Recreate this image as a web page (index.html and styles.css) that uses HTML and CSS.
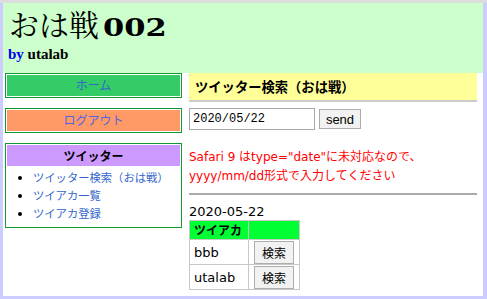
FILE: index.html
```html
<!DOCTYPE html>
<html lang="ja">
<head>
<meta charset="utf-8">
<title>おは戦002</title>
<link rel="stylesheet" href="styles.css">
</head>
<body>
<div class="page">
  <header class="header">
    <h1 class="title">おは戦<span class="num">002</span></h1>
    <p class="byline"><span class="by">by</span> utalab</p>
  </header>
  <div class="columns">
    <nav class="side">
      <a class="btn btn-home" href="#">ホーム</a>
      <a class="btn btn-logout" href="#">ログアウト</a>
      <div class="box">
        <div class="box-head">ツイッター</div>
        <ul class="box-list">
          <li><a href="#">ツイッター検索（おは戦）</a></li>
          <li><a href="#">ツイアカ一覧</a></li>
          <li><a href="#">ツイアカ登録</a></li>
        </ul>
      </div>
    </nav>
    <main class="main">
      <h2 class="main-title">ツイッター検索（おは戦）</h2>
      <form class="search">
        <input class="date-input" type="text" value="2020/05/22">
        <button class="send" type="button">send</button>
      </form>
      <p class="note">Safari 9 はtype="date"に未対応なので、<br>yyyy/mm/dd形式で入力してください</p>
      <hr class="rule">
      <div class="date">2020-05-22</div>
      <table class="accounts">
        <tr><th>ツイアカ</th><th></th></tr>
        <tr><td>bbb</td><td class="act"><button class="go" type="button">検索</button></td></tr>
        <tr><td>utalab</td><td class="act"><button class="go" type="button">検索</button></td></tr>
      </table>
    </main>
  </div>
</div>
</body>
</html>
```
FILE: styles.css
```css
html, body { margin: 0; padding: 0; }
body {
  background: #ccccff;
  border-top: 3px solid #dddddd;
  height: 296px;
  box-sizing: border-box;
  overflow: hidden;
  font-family: "DejaVu Sans", "Noto Sans CJK JP", sans-serif;
}
.page {
  margin: 0 4px 0 3px;
  background: #ffffff;
  height: 293px;
}
.header {
  background: #ccffcc;
  height: 70px;
  padding: 0 0 0 6px;
  box-sizing: border-box;
}
.title {
  margin: 0;
  padding-top: 4px;
  font-family: "Liberation Serif", "Noto Serif CJK JP", "Noto Sans CJK JP", serif;
  font-weight: normal;
  font-size: 30px;
  line-height: 38px;
  color: #000;
}
.title .num {
  display: inline-block;
  font-family: "DejaVu Serif", serif;
  font-weight: bold;
  font-size: 25px;
  margin-left: 4px;
  transform: scaleX(1.22);
  transform-origin: left bottom;
}
.byline {
  margin: 0 0 0 -1px;
  font-family: "Liberation Serif", serif;
  font-weight: bold;
  font-size: 15px;
  line-height: 14px;
  color: #000;
}
.by { color: #0000ee; }
.columns {
  display: flex;
  gap: 7px;
  padding-left: 2px;
}
.side {
  width: 177px;
  display: flex;
  flex-direction: column;
  gap: 10px;
}
.btn {
  display: block;
  height: 25px;
  box-sizing: border-box;
  border: 1px solid #119933;
  box-shadow: inset 0 0 0 1px #ffffff;
  text-align: center;
  font-family: "Noto Sans CJK JP", sans-serif;
  font-size: 12px;
  line-height: 22px;
  color: #3366cc;
  text-decoration: none;
}
.btn-home { background: #33cc66; }
.btn-logout { background: #ff9966; color: #5566dd; }
.box {
  border: 1px solid #119933;
  height: 85px;
  box-sizing: border-box;
  padding: 1px;
}
.box-head {
  background: #cc99ff;
  height: 21px;
  text-align: center;
  font-family: "Noto Sans CJK JP", sans-serif;
  font-weight: bold;
  font-size: 12px;
  line-height: 21px;
  color: #000;
}
.box-list {
  margin: 2px 0 0;
  padding-left: 26px;
  font-family: "Noto Sans CJK JP", sans-serif;
  font-size: 11.3px;
  line-height: 18px;
  white-space: nowrap;
}
.box-list a { color: #3366cc; text-decoration: none; }
.main {
  width: 288px;
}
.main-title {
  margin: 0;
  background: #ffff99;
  height: 29px;
  box-sizing: border-box;
  border-bottom: 2px solid #cccccc;
  padding-left: 6px;
  font-family: "Noto Sans CJK JP", sans-serif;
  font-weight: bold;
  font-size: 13.3px;
  line-height: 27px;
  color: #000;
}
.search {
  margin: 6px 0 0;
  display: flex;
  align-items: center;
  gap: 4px;
}
.date-input {
  width: 126px;
  height: 22px;
  box-sizing: border-box;
  border: 1px solid #a9a9a9;
  padding: 0 3px;
  font-family: "Liberation Mono", monospace;
  font-size: 12px;
  margin: 0;
}
.send {
  height: 20px;
  width: 42px;
  box-sizing: border-box;
  border: 1px solid #adadad;
  background: #f2f2f2;
  font-family: "Liberation Sans", sans-serif;
  font-size: 13px;
  padding: 0;
  margin: 0;
  color: #000;
}
.note {
  margin: 18px 0 0;
  color: #ff0000;
  font-size: 12px;
  line-height: 19px;
  font-family: "DejaVu Sans", "Noto Sans CJK JP", sans-serif;
}
.rule {
  margin: 7px 0 0;
  border: 0;
  border-top: 2px solid #aaaaaa;
  height: 0;
}
.date {
  margin-top: 9px;
  font-size: 13px;
  line-height: 15px;
  color: #000;
}
.accounts {
  margin-top: 1px;
  border-collapse: collapse;
  font-size: 13px;
}
.accounts th, .accounts td {
  border: 1px solid #c8c8c8;
  padding: 0 4px;
  text-align: left;
  white-space: nowrap;
}
.accounts th {
  background: #00ff33;
  font-family: "Noto Sans CJK JP", sans-serif;
  font-weight: bold;
  font-size: 12px;
  height: 18px;
  line-height: 18px;
  width: 50px;
}
.accounts th + th { width: 42px; }
.accounts td {
  height: 24px;
  color: #000;
}
.accounts td.act { padding: 0 4px 0 5px; }
.go {
  width: 40px;
  height: 23px;
  box-sizing: border-box;
  border: 1px solid #adadad;
  background: #f2f2f2;
  font-family: "Noto Sans CJK JP", sans-serif;
  font-size: 12px;
  padding: 0;
  margin: 0;
  display: block;
  color: #000;
}
```
